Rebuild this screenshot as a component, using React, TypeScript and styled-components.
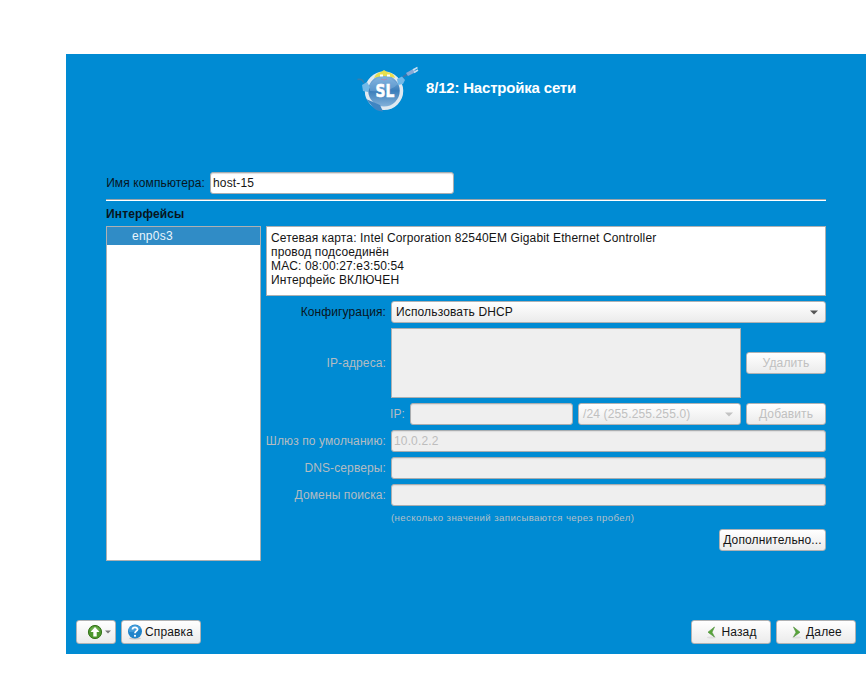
import React from "react";
import styled, { createGlobalStyle, css } from "styled-components";

const GlobalStyle = createGlobalStyle`
  * { box-sizing: border-box; }
  body { margin: 0; background: #fff; font: 12px/14px "Liberation Sans", Arial, sans-serif; letter-spacing: 0.14px; color: #141414; overflow: hidden; }
`;

const Wizard = styled.main`
  width: 800px;
  height: 600px;
  margin: 54px 0 0 66px;
  background: #008bd3;
  display: flex;
  flex-direction: column;
`;

const Header = styled.header`
  height: 118px;
  padding: 12px 0 0 290px;
  display: flex;
  align-items: flex-start;
`;

const Title = styled.h1`
  margin: 13px 0 0 6px;
  font-size: 15px;
  line-height: 18px;
  letter-spacing: -0.19px;
  color: #fff;
  white-space: nowrap;
`;

const Form = styled.section`
  width: 720px;
  margin-left: 40px;
  flex: 1;
`;

const Row = styled.div<{ $top?: number }>`
  display: flex;
  align-items: center;
  gap: 5px;
  margin-top: ${(p) => p.$top ?? 5}px;
`;

const Label = styled.label<{ $w: number; $off?: boolean }>`
  flex: none;
  width: ${(p) => p.$w}px;
  display: flex;
  justify-content: flex-end;
  white-space: nowrap;
  letter-spacing: 0.11px;
  color: ${(p) => (p.$off ? "#b4bcc2" : "#08151d")};
`;

const Input = styled.input<{ $w: number }>`
  width: ${(p) => p.$w}px;
  height: 22px;
  padding: 0 2px;
  border: 1px solid #a9adb0;
  border-radius: 3px;
  background: #fff;
  box-shadow: inset 0 1px 1px #ddd;
  font: inherit;
  letter-spacing: inherit;
  color: #141414;
  outline: none;
  &:disabled { background: #efefef; color: #bdbdbd; }
`;

const raised = css`
  border: 1px solid #b0b2b4;
  border-radius: 3px;
  background: linear-gradient(#fff, #ebebeb);
  font: inherit;
  letter-spacing: inherit;
  color: #141414;
  white-space: nowrap;
  &:disabled { color: #c0c0c0; }
`;

const Button = styled.button<{ $w: number; $h?: number; $gap?: number }>`
  ${raised}
  flex: none;
  width: ${(p) => p.$w}px;
  height: ${(p) => p.$h ?? 22}px;
  padding: 0;
  display: flex;
  align-items: center;
  justify-content: center;
  gap: ${(p) => p.$gap ?? 0}px;
`;

const MenuButton = styled(Button)`
  justify-content: flex-end;
  padding-right: 4px;
`;

const HelpButton = styled(Button)`
  padding-right: 2px;
`;

const StepButton = styled(Button)`
  padding-left: 2px;
`;

const Select = styled.button<{ $w: number }>`
  ${raised}
  width: ${(p) => p.$w}px;
  height: 22px;
  padding: 0 7px 0 4px;
  display: flex;
  align-items: center;
  justify-content: space-between;
`;

const Divider = styled.div`
  height: 2px;
  margin-top: 5px;
  border-top: 1px solid #9aa3a8;
  border-bottom: 1px solid #fff;
`;

const Heading = styled.h2`
  margin: 6px 0 5px;
  font-size: 12px;
  line-height: 14px;
  color: #08151d;
`;

const Columns = styled.div`
  display: grid;
  grid-template-columns: 155px 560px;
  gap: 5px;
  height: 335px;
`;

const InterfaceList = styled.ul`
  margin: 0;
  padding: 0;
  list-style: none;
  background: #fff;
  border: 1px solid #adb0b2;
`;

const InterfaceItem = styled.li`
  height: 18px;
  padding-left: 25px;
  line-height: 18px;
  letter-spacing: 0.25px;
  background: #308cc6;
  color: #e8f5fc;
`;

const Info = styled.div`
  height: 70px;
  padding: 4px;
  border: 1px solid #adb0b2;
  background: #fff;
  white-space: pre;
`;

const AddressBox = styled.div`
  width: 350px;
  height: 70px;
  border: 1px solid #adb0b2;
  background: #efefef;
`;

const Hint = styled.div`
  margin: 5px 0 4px 125px;
  height: 14px;
  font-size: 9.6px;
  color: #b4c0c8;
  white-space: nowrap;
  letter-spacing: 0.42px;
`;

const Right = styled.div`
  display: flex;
  justify-content: flex-end;
`;

const Footer = styled.footer`
  display: flex;
  gap: 5px;
  padding: 0 10px 10px;
`;

const Spacer = styled.div`
  flex: 1;
`;

const Caret = ({ color = "#555", width = 8 }: { color?: string; width?: number }) => (
  <svg width={width} height={(width * 5) / 8} viewBox="0 0 8 5">
    <path d="M0 .5H8L4 4.5Z" fill={color} />
  </svg>
);

const Logo = () => (
  <svg width="64" height="48" viewBox="0 0 64 48">
    <defs>
      <linearGradient id="ball" x1="0" y1="0" x2="0" y2="1">
        <stop offset="0" stopColor="#8dbbe3" />
        <stop offset=".5" stopColor="#3a7dba" />
        <stop offset="1" stopColor="#8bb7dd" />
      </linearGradient>
    </defs>
    <path d="M1.500 13.500Q6 12 8 17" fill="none" stroke="#377fae" strokeWidth="1.500" />
    <circle cx="28" cy="24.800" r="17.500" fill="url(#ball)" stroke="#dfe9f1" strokeWidth="3.500" />
    <path d="M14 18Q27 4 42 18Q34 27 14 25Z" fill="#8cbce5" opacity=".4" />
    <path d="M18 12Q20 7 25 6L28 4L31 6Q38 7 39 12Q28 8 18 12Z" fill="#e9df4e" />
    <path d="M24 9.500H27M31 9.500H34" stroke="#fff" strokeWidth="1.800" />
    <path d="M25 13Q28 15 31 13" stroke="#b08bb8" fill="none" />
    <path d="M6 19L11 16L14 21L12 26L7 25Z" fill="#72b9e7" />
    <path d="M41 13L46 10.500L49 14L47 18L42 19Z" fill="#71b9e9" />
    <path d="M47 11L52 8" stroke="#3975af" strokeWidth="2" />
    <path d="M50 7L58 2.500L60 6L52 10Z" fill="#86a9d6" />
    <path d="M57 4L61.500 1.500M58 6.500L62 4" stroke="#c7dff2" strokeWidth="1.500" />
    <path d="M10 33L17 36L24 39L27 45.500Q19 45 16 40Z" fill="#3f85c2" />
    <text x="19.500" y="30.500" fontFamily="DejaVu Sans, sans-serif" fontSize="17" fontWeight="bold" textLength="19" lengthAdjust="spacingAndGlyphs" fill="#fff" stroke="#fff" strokeWidth=".6">SL</text>
  </svg>
);

const UpIcon = () => (
  <svg width="16" height="16" viewBox="0 0 16 16">
    <circle cx="8" cy="8" r="6.600" fill="#4d972e" stroke="#39751e" />
    <path d="M3 5Q8 0 13 5L12 7H4Z" fill="#8bc36c" opacity=".5" />
    <path d="M8 3L12.500 8H9.700V12.500H6.300V8H3.500Z" fill="#fff" />
  </svg>
);

const HelpIcon = () => (
  <svg width="16" height="16" viewBox="0 0 16 16">
    <ellipse cx="8" cy="14.300" rx="6" ry="1.300" fill="#ccc" />
    <circle cx="8" cy="7.500" r="7" fill="#1f83ca" />
    <path d="M2 4Q8-2 14 4Q11 8 2 8Z" fill="#5baee2" opacity=".6" />
    <path d="M5.500 5.500C5.500 2.700 10.700 2.700 10.500 5.500C10.300 7.200 8 7.200 8 9.200" fill="none" stroke="#fff" strokeWidth="1.800" />
    <circle cx="8" cy="11.800" r="1.100" fill="#fff" />
  </svg>
);

const Chevron = ({ flip = false }: { flip?: boolean }) => (
  <svg width="9" height="14" viewBox="0 0 9 14">
    <ellipse cx="4.500" cy="12.500" rx="4.500" ry="1" fill="#dedede" />
    <path
      d={flip ? "M1.500 2L8 7.200L1.500 12L4 7.200Z" : "M7.500 2L1 7.200L7.500 12L5 7.200Z"}
      fill="#57a636"
      stroke="#579446"
      strokeWidth=".7"
    />
  </svg>
);

const info = `Сетевая карта: Intel Corporation 82540EM Gigabit Ethernet Controller
провод подсоединён
MAC: 08:00:27:e3:50:54
Интерфейс ВКЛЮЧЕН`;

export default function App() {
  return (
    <>
      <GlobalStyle />
      <Wizard>
        <Header>
          <Logo />
          <Title>8/12: Настройка сети</Title>
        </Header>
        <Form>
          <Row $top={0}>
            <Label $w={99}>Имя компьютера:</Label>
            <Input $w={244} defaultValue="host-15" />
          </Row>
          <Divider />
          <Heading>Интерфейсы</Heading>
          <Columns>
            <InterfaceList>
              <InterfaceItem>enp0s3</InterfaceItem>
            </InterfaceList>
            <div>
              <Info>{info}</Info>
              <Row>
                <Label $w={120}>Конфигурация:</Label>
                <Select $w={435}>
                  Использовать DHCP
                  <Caret />
                </Select>
              </Row>
              <Row>
                <Label $w={120} $off>IP-адреса:</Label>
                <AddressBox />
                <Button $w={80} disabled>Удалить</Button>
              </Row>
              <Row>
                <Label $w={139} $off>IP:</Label>
                <Input $w={163} disabled />
                <Select $w={163} disabled>
                  /24 (255.255.255.0)
                  <Caret color="#c3c3c3" />
                </Select>
                <Button $w={80} disabled>Добавить</Button>
              </Row>
              <Row>
                <Label $w={120} $off>Шлюз по умолчанию:</Label>
                <Input $w={435} defaultValue="10.0.2.2" disabled />
              </Row>
              <Row>
                <Label $w={120} $off>DNS-серверы:</Label>
                <Input $w={435} disabled />
              </Row>
              <Row>
                <Label $w={120} $off>Домены поиска:</Label>
                <Input $w={435} disabled />
              </Row>
              <Hint>(несколько значений записываются через пробел)</Hint>
              <Right>
                <Button $w={107}>Дополнительно...</Button>
              </Right>
            </div>
          </Columns>
        </Form>
        <Footer>
          <MenuButton $w={40} $h={24} $gap={2}>
            <UpIcon />
            <Caret color="#777" width={6} />
          </MenuButton>
          <HelpButton $w={80} $h={24} $gap={2}>
            <HelpIcon />
            Справка
          </HelpButton>
          <Spacer />
          <StepButton $w={80} $h={24} $gap={5}>
            <Chevron />
            Назад
          </StepButton>
          <StepButton $w={80} $h={24} $gap={5}>
            <Chevron flip />
            Далее
          </StepButton>
        </Footer>
      </Wizard>
    </>
  );
}
